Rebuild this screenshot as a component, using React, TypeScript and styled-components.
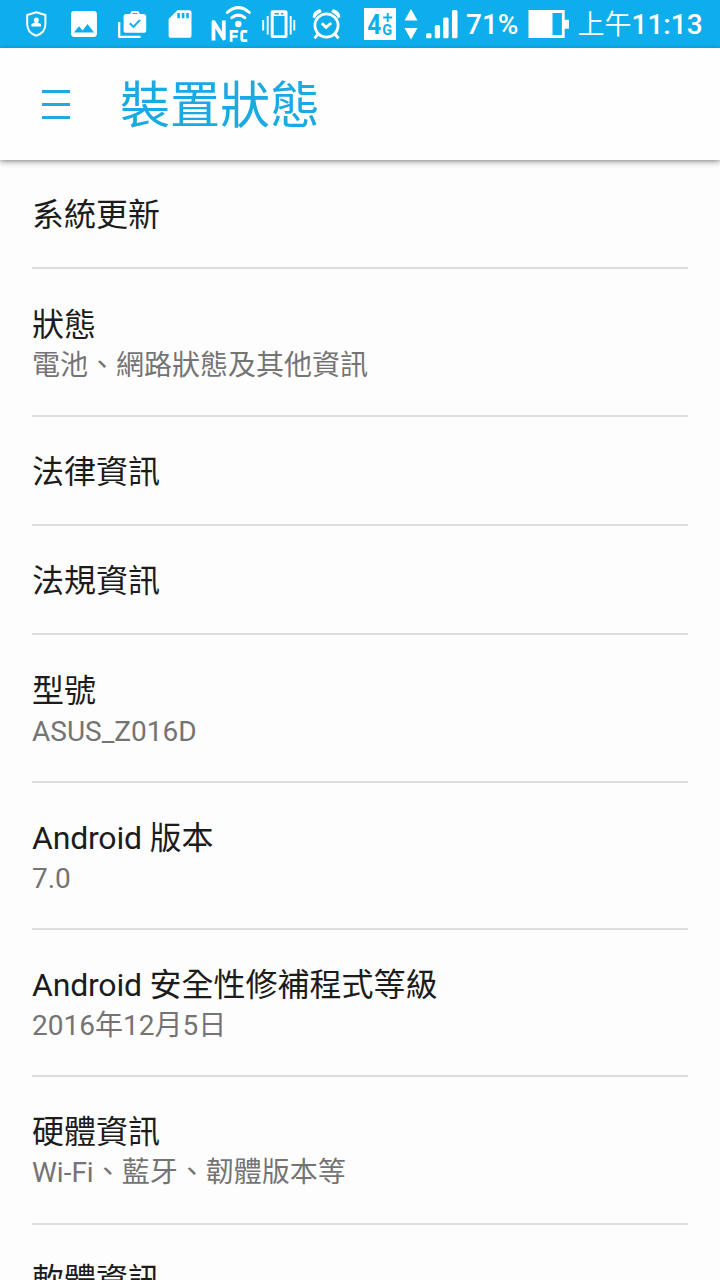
import React from "react";
import styled, { createGlobalStyle } from "styled-components";

const GlobalStyle = createGlobalStyle`
  * { box-sizing: border-box; }
  html, body { margin: 0; padding: 0; background: #fdfdfd; overflow: hidden; }
  body { font-family: Roboto, "Noto Sans CJK TC", sans-serif; }
`;

const BLUE = "#0eaeed";

const Screen = styled.div`
  width: 720px;
  height: 1280px;
  overflow: hidden;
  display: flex;
  flex-direction: column;
  background: #fdfdfd;
`;

const StatusBar = styled.header`
  flex: none;
  height: 48px;
  display: flex;
  align-items: center;
  background: ${BLUE};
  color: #fff;
`;

const StatusIcon = styled.svg<{ $gap: number }>`
  flex: none;
  display: block;
  margin-left: ${(p) => p.$gap}px;
  fill: #fff;
  overflow: visible;
`;

const StatusText = styled.span<{ $gap: number; $width: number }>`
  flex: none;
  margin-left: ${(p) => p.$gap}px;
  width: ${(p) => p.$width}px;
  font-size: 28px;
  line-height: 48px;
  height: 46px;
  white-space: nowrap;
  font-weight: 500;
`;

const Period = styled.span`
  font-weight: 350;
  font-size: 27px;
`;

const AppBar = styled.div`
  flex: none;
  position: relative;
  height: 112px;
  display: flex;
  align-items: center;
  padding-left: 42px;
  background: #fefefe;
  box-shadow: 0 2px 6px rgba(0, 0, 0, 0.36), 0 1px 2px rgba(0, 0, 0, 0.12);
`;

const MenuButton = styled.button`
  display: flex;
  flex-direction: column;
  gap: 10px;
  width: 28px;
  padding: 0;
  border: 0;
  background: none;
`;

const MenuLine = styled.span`
  height: 3px;
  background: #1fa9df;
`;

const Heading = styled.h1`
  margin: 0 0 0 50px;
  padding-top: 2px;
  font-size: 50px;
  line-height: 112px;
  height: 112px;
  font-weight: 400;
  color: #1aa9e0;
`;

const List = styled.main`
  flex: 1;
  min-height: 0;
  padding: 0 32px;
  overflow: hidden;
`;

const Row = styled.div<{ $double: boolean }>`
  height: ${(p) => (p.$double ? 147.333 : 109.333)}px;
  padding-top: 35.2px;
  border-bottom: 2px solid #dedede;
`;

const Title = styled.div`
  font-size: 32px;
  line-height: 40px;
  height: 40px;
  color: #1c1c1c;
  white-space: nowrap;
`;

const Latin = styled.span`
  letter-spacing: -0.2px;
`;

const Summary = styled.div`
  font-size: 28px;
  line-height: 42px;
  height: 42px;
  color: #747474;
  white-space: nowrap;
`;

const rows: { latin?: string; title: string; summary?: string }[] = [
  { title: "系統更新" },
  { title: "狀態", summary: "電池、網路狀態及其他資訊" },
  { title: "法律資訊" },
  { title: "法規資訊" },
  { title: "型號", summary: "ASUS_Z016D" },
  { latin: "Android ", title: "版本", summary: "7.0" },
  { latin: "Android ", title: "安全性修補程式等級", summary: "2016年12月5日" },
  { title: "硬體資訊", summary: "Wi-Fi、藍牙、韌體版本等" },
  { title: "軟體資訊" },
];

// Every status icon spans the full bar height, so its viewBox uses bar coordinates.
function Icon({ x, w, gap, children }: { x: number; w: number; gap: number; children: React.ReactNode }) {
  return (
    <StatusIcon $gap={gap} width={w} height={48} viewBox={`${x} 0 ${w} 48`}>
      {children}
    </StatusIcon>
  );
}

export default function App() {
  return (
    <Screen>
      <GlobalStyle />
      <StatusBar>
        <Icon x={26} w={21} gap={26}>
          <path d="M36.3 12.3 45.4 15v9.2c0 5.5-3.7 9.6-9.1 11.6-5.4-2-9.1-6.1-9.1-11.6V15z" fill="none" stroke="#fff" strokeWidth="2" strokeLinejoin="round" />
          <circle cx="36.3" cy="20" r="2.5" />
          <path d="M34.8 21h3v1.5l3.2 1.4v2.6h-9.6v-2.6l3.4-1.4z" />
        </Icon>
        <Icon x={71} w={26} gap={24}>
          <path transform="translate(66.7 6.7) scale(1.44)" d="M21 19V5c0-1.1-.9-2-2-2H5c-1.1 0-2 .9-2 2v14c0 1.1.9 2 2 2h14c1.1 0 2-.9 2-2zM8.5 13.5l2.5 3.01L14.5 12l4.5 6H5l3.5-4.5z" />
        </Icon>
        <Icon x={118} w={28} gap={21}>
          <path fillRule="evenodd" d="M126 14h4.5v-.6c0-1.4 1-2.4 2.4-2.4h4.2c1.4 0 2.4 1 2.4 2.4v.6h4.3c1.4 0 2.4 1 2.4 2.4v14c0 1.4-1 2.4-2.4 2.4H126c-1.4 0-2.4-1-2.4-2.4v-14c0-1.4 1-2.4 2.4-2.4zm6.7 0h4.7v-1h-4.7z" />
          <path d="m129.8 23.3 3.7 3.6 6.5-7" fill="none" stroke={BLUE} strokeWidth="2" />
          <path d="M119.2 22v14.8H140.5" fill="none" stroke="#fff" strokeWidth="2.3" strokeLinejoin="round" />
        </Icon>
        <Icon x={168} w={24} gap={22}>
          <path fillRule="evenodd" d="M177.500 10.200h11.800c1.300 0 2.200.9 2.200 2.200v23c0 1.400-.9 2.400-2.300 2.400H171c-1.400 0-2.400-1-2.400-2.400V19zM177.300 13v5.300h2.600V13zm4.500 0v5.300h2.600V13zm4.400 0v5.300h2.600V13z" />
        </Icon>
        <Icon x={211} w={40} gap={19}>
          <path d="M213.500 40.500V21.800l10.300 16.700V20.500" fill="none" stroke="#fff" strokeWidth="3.800" strokeLinejoin="round" />
          <path d="M231.200 41.800V31.400h7M231.200 36.400h6.300M247.300 31.400h-3.900q-1.600 0-1.600 1.600v6q0 1.600 1.600 1.600h3.900" fill="none" stroke="#fff" strokeWidth="2.800" />
          <circle cx="238.300" cy="24" r="3.200" />
          <path d="M231.800 17.700Q238.300 12.500 244.800 17.700M227.300 12.500Q238.300 2.700 249.300 12.500" fill="none" stroke="#fff" strokeWidth="3" strokeLinecap="round" />
        </Icon>
        <Icon x={262} w={33} gap={11}>
          <path fillRule="evenodd" d="M272.500 10.200h13.200q1.800 0 1.800 1.800v24.200q0 1.800-1.800 1.800h-13.200q-1.800 0-1.800-1.800V12q0-1.800 1.800-1.800zm1.200 5.700v19.300h10.900V15.900zm.9-3v1.500h4.400v-1.500zm6.300 0v1.500h2.500v-1.500z" />
          <path d="M267.700 16v18.500M290.700 16v18.500M263.200 20v10.500M294.300 20v10.500" stroke="#fff" strokeWidth="1.900" />
        </Icon>
        <Icon x={312} w={29} gap={17}>
          <circle cx="326.500" cy="25.500" r="11.600" fill="none" stroke="#fff" strokeWidth="2.700" />
          <path d="m321.800 23.300 4.200 4 5.200-4.300" fill="none" stroke="#fff" strokeWidth="2.800" />
          <path d="M312.600 17.300q.2-6.500 7.600-8.300l1.500 3q-5 2.300-6.800 6.200zM340.400 17.300q-.2-6.500-7.600-8.300l-1.500 3q5 2.300 6.800 6.200z" />
          <path d="m318 34-3.500 4.300M335 34l3.500 4.300" stroke="#fff" strokeWidth="2.800" />
        </Icon>
        <Icon x={364} w={32} gap={23}>
          <path d="M364 8h32v32h-32z" />
          <text x="367.300" y="34.300" fill={BLUE} fontSize="27.500" fontWeight="700" textLength="14" lengthAdjust="spacingAndGlyphs">4</text>
          <text x="382.300" y="34.500" fill={BLUE} fontSize="14.500" fontWeight="700">G</text>
          <path d="M387.700 13v9M383.200 17.500h9" stroke={BLUE} strokeWidth="1.900" />
        </Icon>
        <Icon x={404} w={14} gap={8}>
          <path d="M411 9l6.500 11.500h-13zM411 39.500 417.500 28h-13z" />
        </Icon>
        <Icon x={426} w={32} gap={8}>
          <rect x="426" y="33.300" width="5.500" height="5" rx="1.500" />
          <rect x="434.800" y="25" width="5.300" height="13.300" rx="1.500" />
          <rect x="443.200" y="17.500" width="5.400" height="20.800" rx="1.500" />
          <rect x="452" y="10" width="5.500" height="28.300" rx="1.500" />
        </Icon>
        <StatusText $gap={8} $width={62}>71%</StatusText>
        <Icon x={528} w={41} gap={0}>
          <path fillRule="evenodd" d="M528.500 10h36.200v9.700h4.200v9h-4.200V38h-36.200zM552.500 13v22h9.400V13z" />
        </Icon>
        <StatusText $gap={8.5} $width={130}>
          <Period>上午</Period>11:13
        </StatusText>
      </StatusBar>
      <AppBar>
        <MenuButton aria-label="選單">
          <MenuLine />
          <MenuLine />
          <MenuLine />
        </MenuButton>
        <Heading>裝置狀態</Heading>
      </AppBar>
      <List>
        {rows.map((row) => (
          <Row key={row.title} $double={!!row.summary}>
            <Title>
              {row.latin && <Latin>{row.latin}</Latin>}
              {row.title}
            </Title>
            {row.summary && <Summary>{row.summary}</Summary>}
          </Row>
        ))}
      </List>
    </Screen>
  );
}
